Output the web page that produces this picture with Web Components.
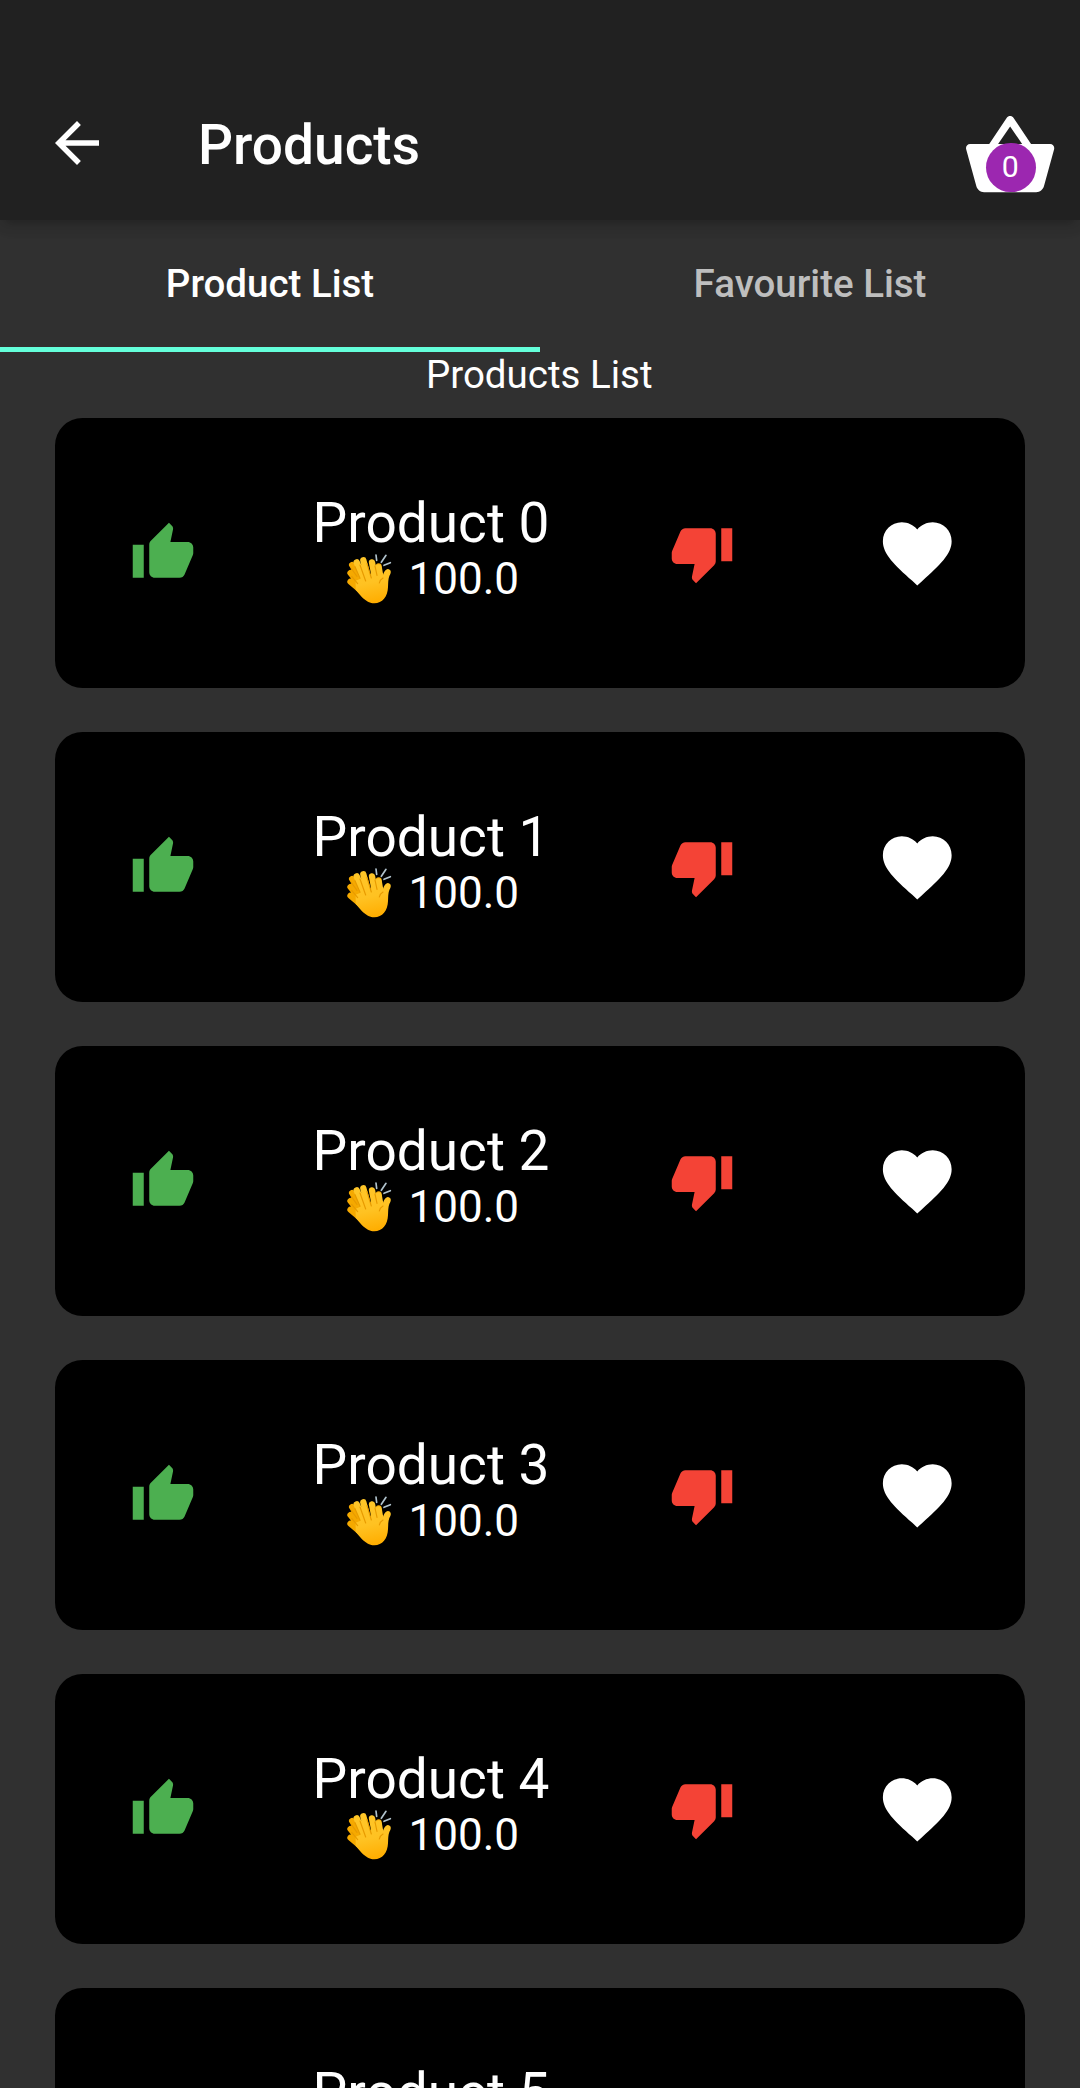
<!DOCTYPE html>
<html lang="en">
<head>
<meta charset="utf-8">
<title>Products</title>
<style>
html,body{margin:0;height:100%;overflow:hidden;background:#303030}
body{font-family:Roboto,sans-serif;color:#fff}
</style>
</head>
<body>
<products-page></products-page>
<script>
const define = (name, html, setup) => customElements.define(name, class extends HTMLElement {
  connectedCallback() {
    if (this.shadowRoot) return;
    const root = this.attachShadow({ mode: 'open' });
    const t = document.createElement('template');
    t.innerHTML = html;
    root.append(t.content.cloneNode(true));
    if (setup) setup(this, root);
  }
});

const icons = {
  back: 'M20 11H7.83l5.59-5.59L12 4l-8 8 8 8 1.41-1.41L7.83 13H20v-2z',
  up: 'M1 21h4V9H1v12zm22-11c0-1.1-.9-2-2-2h-6.31l.95-4.57.03-.32c0-.41-.17-.79-.44-1.06L14.17 1 7.59 7.59C7.22 7.95 7 8.45 7 9v10c0 1.1.9 2 2 2h9c.83 0 1.54-.5 1.84-1.22l3.02-7.05c.09-.23.14-.47.14-.73v-2z',
  down: 'M15 3H6c-.83 0-1.54.5-1.84 1.22l-3.02 7.05c-.09.23-.14.47-.14.73v2c0 1.1.9 2 2 2h6.31l-.95 4.57-.03.32c0 .41.17.79.44 1.06L9.83 23l6.59-6.59c.36-.36.58-.86.58-1.41V5c0-1.1-.9-2-2-2zm4 0v12h4V3h-4z',
  heart: 'M12 21.35l-1.45-1.32C5.4 15.36 2 12.28 2 8.5 2 5.42 4.42 3 7.5 3c1.74 0 3.41.81 4.5 2.09C13.09 3.81 14.76 3 16.5 3 19.58 3 22 5.42 22 8.5c0 3.78-3.4 6.86-8.55 11.54L12 21.35z',
  basket: 'M17.21 9l-4.38-6.56c-.19-.28-.51-.42-.83-.42-.32 0-.64.14-.83.43L6.79 9H2c-.55 0-1 .45-1 1 0 .09.01.18.04.27l2.54 9.27c.23.84 1 1.46 1.92 1.46h13c.92 0 1.69-.62 1.93-1.46l2.54-9.27L23 10c0-.55-.45-1-1-1h-4.79zM9 9l3-4.4L15 9H9z'
};

define('md-icon', `<style>
:host{display:block;width:66px;height:66px;flex:none}
svg{display:block;width:100%;height:100%;fill:currentColor}
</style><svg viewBox="0 0 24 24"><path/></svg>`, (el, root) => {
  root.querySelector('path').setAttribute('d', icons[el.getAttribute('name')]);
});

define('clap-hands', `<style>
:host{display:inline-block;width:56px;height:60px;margin:-14px .6px -4px -2px;vertical-align:-9.5px}
svg{display:block}
</style><svg width="56" height="60" viewBox="0 0 168 180" fill="none" stroke-linecap="round" stroke-linejoin="round" role="img" aria-label="👏">
<defs><linearGradient id="g" gradientUnits="userSpaceOnUse" x1="70" y1="30" x2="100" y2="165"><stop offset="0" stop-color="#ffc628"/><stop offset=".55" stop-color="#ffc222"/><stop offset="1" stop-color="#ffad00"/></linearGradient></defs>
<g stroke="#f5a900" stroke-width="18"><path d="M33 51L72 112M28 75L72 130M28 101L78 143M113 55L112 95"/></g>
<path d="M44 98L112 70C118 76 122 84 124 92C126 78 130 66 140 63C150 64 151 72 148 78C141 90 142 102 141 118C140 146 124 166 100 166C84 166 74 158 63 148L44 126Z" fill="url(#g)"/>
<g stroke="url(#g)" stroke-width="19"><path d="M47 43L76 112M67 37L86 108M93 43L104 100M113 58L120 98"/></g>
<g stroke="#e89b00" stroke-width="3.5"><path d="M42 56L57 91M57 51L74 99M78 47L91 90M102 54L108 82M32 85L50 107M31 62L48 85"/><path d="M126 90C119 94 116 99 115 105"/></g>
<g stroke="#b0c2cc" stroke-width="5"><path d="M105 21L107 37M135 22L121 43M148 44L129 52"/></g>
</svg>`);

define('basket-badge', `<style>
:host{display:block;position:relative;width:96.25px;height:96.25px}
md-icon{width:100%;height:100%}
.count{position:absolute;left:24.3px;top:34.8px;width:49.5px;height:49.5px;border-radius:50%;background:#9c27b0;display:flex;align-items:center;justify-content:center;font-size:30.25px;line-height:49.5px}
.count span{position:relative;left:-.5px;top:-.3px}
</style><md-icon name="basket"></md-icon><div class="count"><span><slot></slot></span></div>`);

define('app-bar', `<style>
:host{display:flex;box-sizing:border-box;height:220px;padding:66px 22px 0 44px;align-items:center;background:#212121;position:relative;z-index:1;
box-shadow:0 5.5px 11px -2.75px rgba(0,0,0,.2),0 11px 13.75px rgba(0,0,0,.03),0 2.75px 20px rgba(0,0,0,.05)}
h1{margin:4px 0 0 88px;flex:1;font-size:55px;font-weight:500;line-height:64px}
</style><md-icon name="back"></md-icon><h1><slot></slot></h1><slot name="action"></slot>`);

define('tab-item', `<style>
:host{flex:1;display:flex;box-sizing:border-box;align-items:center;justify-content:center;height:132px;border-bottom:5.5px solid transparent;color:rgba(255,255,255,.7);font-size:38.5px;font-weight:500;line-height:46px}
:host([selected]){color:#fff}
</style><span><slot></slot></span>`);

define('tab-bar', `<style>
:host{display:block}
.tabs{display:flex}
.line{width:540px;height:5.5px;margin-top:-5.5px;background:#64ffda}
</style><div class="tabs"><slot></slot></div><div class="line"></div>`);

define('product-card', `<style>
:host{display:flex;height:270px;flex:none;align-items:center;background:#000;border-radius:27.5px}
.cell{flex:2 1 0;display:flex;justify-content:center;box-sizing:border-box}
.text{flex:3 1 0;min-width:0;box-sizing:border-box;padding:0 3px 9px 0;text-align:center;white-space:nowrap}
.name{font-size:55px;line-height:64px}
.claps{height:51px;font-size:44px;line-height:49px}
.up{color:#4caf50;padding-left:.6px}
.down{color:#f44336;padding-right:1px}
.fav{padding-bottom:.5px}
.fav md-icon{width:82.5px;height:82.5px}
</style>
<div class="cell up"><md-icon name="up"></md-icon></div>
<div class="text"><div class="name"><slot></slot></div><div class="claps"><clap-hands></clap-hands> <slot name="claps"></slot></div></div>
<div class="cell down"><md-icon name="down"></md-icon></div>
<div class="cell fav"><md-icon name="heart"></md-icon></div>`);

define('product-list', `<style>
:host{display:flex;flex-direction:column;padding:0 55px}
h2{margin:0 0 21px;padding-right:1.5px;font-size:38.5px;font-weight:400;line-height:45px;text-align:center}
.cards{display:flex;flex-direction:column;gap:44px}
</style><h2>Products List</h2><div class="cards"><slot></slot></div>`, el => {
  for (let i = 0; i < 6; i++) {
    const card = document.createElement('product-card');
    card.innerHTML = `Product ${i}<span slot="claps">100.0</span>`;
    el.append(card);
  }
});

define('products-page', `<style>
:host{display:block;width:1080px;height:2088px;overflow:hidden;background:#303030}
.badge{margin:26px 0 0}
</style>
<app-bar>Products<basket-badge slot="action" class="badge">0</basket-badge></app-bar>
<tab-bar><tab-item selected>Product List</tab-item><tab-item>Favourite List</tab-item></tab-bar>
<product-list></product-list>`);
</script>
</body>
</html>
